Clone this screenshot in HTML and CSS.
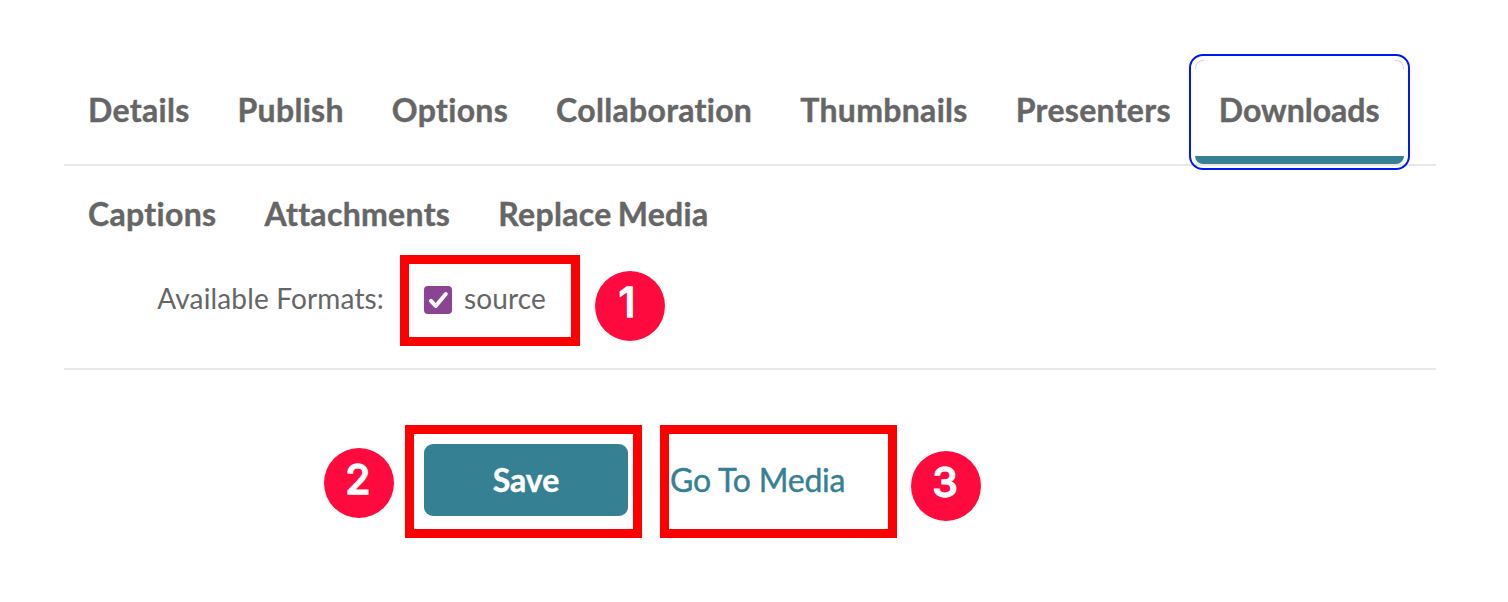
FILE: index.html
```
<!DOCTYPE html>
<html lang="en">
<head>
    <meta charset="UTF-8">
    <meta name="viewport" content="width=device-width, initial-scale=1.0">
    <title>Edit Media - Downloads</title>
    <link rel="stylesheet" href="styles.css">
</head>
<body>

    <!-- Tabs -->
    <ul class="tabs">
        <li><a class="tab">Details</a></li>
        <li><a class="tab">Publish</a></li>
        <li><a class="tab">Options</a></li>
        <li><a class="tab">Collaboration</a></li>
        <li><a class="tab">Thumbnails</a></li>
        <li><a class="tab">Presenters</a></li>
        <li><a class="tab active">Downloads</a></li>
        <li><a class="tab">Captions</a></li>
        <li><a class="tab">Attachments</a></li>
        <li><a class="tab">Replace Media</a></li>
    </ul>

    <!-- Download formats -->
    <div class="form-row">
        <span class="form-label">Available Formats:</span>
        <label class="option">
            <span class="checkbox">
                <svg width="28" height="28" viewBox="0 0 28 28"><path d="M7 14.8l4.7 5.2L21.8 8" fill="none" stroke="#fff" stroke-width="4" stroke-linecap="round" stroke-linejoin="round"/></svg>
            </span>
            <span class="option-text">source</span>
        </label>
        <div class="highlight highlight-source"></div>
        <div class="step step-1">1</div>
    </div>

    <!-- Actions -->
    <div class="actions">
        <button class="btn">Save</button>
        <a class="link">Go To Media</a>
        <div class="highlight highlight-save"></div>
        <div class="highlight highlight-media"></div>
        <div class="step step-2">2</div>
        <div class="step step-3">3</div>
    </div>

</body>
</html>
```

FILE: styles.css
```
* {
    box-sizing: border-box;
}
body {
    margin: 0;
    padding: 60px 72px 0 64px;
    height: 602px;
    overflow: hidden;
    background: #fff;
    font-family: Lato, sans-serif;
    font-variant-ligatures: none;
    color: #666;
}
.tabs {
    display: flex;
    flex-wrap: wrap;
    align-content: flex-start;
    height: 106px;
    margin: 0;
    padding: 0;
    list-style: none;
    border-bottom: 2px solid #e8e8e8;
}
.tab {
    display: block;
    height: 104px;
    padding: 0 24px;
    font-size: 32px;
    font-weight: bold;
    line-height: 100px;
    letter-spacing: 0.31px;
    word-spacing: -2px;
    white-space: nowrap;
    -webkit-text-stroke: 0.4px #666;
}
.tab.active {
    position: relative;
    background: linear-gradient(#fff 96px, #368094 96px);
    border-radius: 8px;
    letter-spacing: 0;
    outline: 2px solid #0019f0;
    outline-offset: 4px;
}
.tab.active::before,
.tab.active::after {
    content: "";
    position: absolute;
    top: 0;
    width: 8px;
    height: 8px;
    border-top: 1px solid #d4d6fa;
}
.tab.active::before {
    left: 0;
    border-left: 1px solid #d4d6fa;
    border-top-left-radius: 8px;
}
.tab.active::after {
    right: 0;
    border-right: 1px solid #d4d6fa;
    border-top-right-radius: 8px;
}
.form-row {
    position: relative;
    display: flex;
    align-items: center;
    height: 204px;
    padding-top: 64px;
    border-bottom: 2px solid #e8e8e8;
    font-size: 28px;
    letter-spacing: 0.15px;
}
.form-label {
    width: 320px;
    padding-bottom: 2px;
    text-align: right;
}
.option {
    display: flex;
    align-items: center;
    gap: 12px;
    margin-left: 40px;
}
.option-text {
    padding-bottom: 2px;
}
.checkbox {
    width: 28px;
    height: 28px;
    margin-top: 2px;
    background: #8b4492;
    border-radius: 4px;
}
.checkbox svg {
    display: block;
}
.actions {
    position: relative;
    display: flex;
    align-items: center;
    height: 220px;
    padding-left: 360px;
}
.btn {
    width: 204px;
    height: 72px;
    padding: 0 0 1px;
    background: #368094;
    border: none;
    border-radius: 9px;
    color: #fff;
    font: bold 32px Lato, sans-serif;
    -webkit-text-stroke: 0.4px #fff;
}
.link {
    margin-left: 42px;
    padding-bottom: 2px;
    font-size: 32px;
    letter-spacing: -0.2px;
    color: #368094;
    -webkit-text-stroke: 0.4px #368094;
}

/* Numbered callouts */
.highlight {
    position: absolute;
    border: 9px solid #f00;
}
.highlight-source {
    left: 336px;
    top: 89px;
    width: 180px;
    height: 91px;
}
.highlight-save {
    left: 341px;
    top: 55px;
    width: 237px;
    height: 113px;
}
.highlight-media {
    left: 596px;
    top: 55px;
    width: 237px;
    height: 113px;
}
.step {
    position: absolute;
    width: 70px;
    height: 70px;
    padding-right: 2px;
    background: #ff0a3f;
    border-radius: 50%;
    color: #fff;
    font: 500 41px/63px Inter, sans-serif;
    letter-spacing: 0;
    text-align: center;
    -webkit-text-stroke: 1.3px #fff;
}
.step-1 {
    left: 531px;
    top: 105px;
    padding-right: 6px;
}
.step-2 {
    left: 260px;
    top: 78px;
}
.step-3 {
    left: 847px;
    top: 81px;
}
```
